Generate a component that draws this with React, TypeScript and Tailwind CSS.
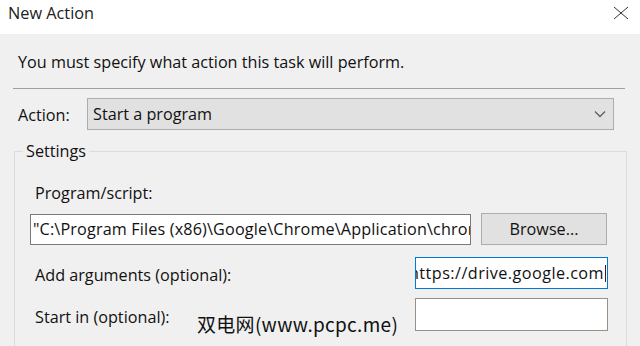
const FONT = { fontFamily: '"Open Sans", "Noto Sans", Arial, sans-serif' };

export default function App() {
  return (
    <div
      className="relative w-[640px] h-[346px] overflow-hidden bg-[#f0f0f0] text-[16.2px] text-[#111]"
      style={FONT}
    >
      {/* title bar */}
      <div className="h-[34px] bg-white flex items-center justify-between pl-[8px] pr-[10px]">
        <span className="text-[16.3px] text-[#222] leading-none -mt-[7px]">New Action</span>
        <svg width="18" height="14" viewBox="0 0 18 14" className="-mt-[8px]">
          <path d="M2 1 L16 13 M16 1 L2 13" stroke="#333" strokeWidth="1" fill="none" />
        </svg>
      </div>

      <div className="pl-[13px] pr-[15px]">
        <p className="pt-[17px] pl-[5px] leading-[22px]">
          You must specify what action this task will perform.
        </p>
        <div className="mt-[15px] border-t border-[#a0a0a0]" />

        {/* action row */}
        <div className="mt-[9px] flex items-center pl-[5px] pr-[11px]">
          <span className="w-[69px] mt-[2px]">Action:</span>
          <div className="flex-1 h-[32px] bg-[#e1e1e1] border border-[#adadad] flex items-center justify-between pl-[5px] pr-[7px]">
            <span className="mt-[1px]">Start a program</span>
            <svg width="12" height="8" viewBox="0 0 12 8">
              <path d="M1 1.5 L6 6.5 L11 1.5" stroke="#606060" strokeWidth="1.3" fill="none" />
            </svg>
          </div>
        </div>

        {/* settings group */}
        <fieldset className="mt-[10px] ml-[1px] mr-[-2px] border border-[#dcdcdc] pl-[15px] pr-[18px] h-[220px]">
          <legend className="-ml-[7px] px-[3px] leading-[22px]">Settings</legend>

          <div className="pl-[5px] mt-[20px] leading-[22px]">Program/script:</div>
          <div className="mt-[9px] flex items-center gap-[10px]">
            <div className="w-[441px] h-[31px] bg-white border border-[#7a7a7a] flex items-center pl-[2px] overflow-hidden">
              <span className="whitespace-nowrap tracking-[0.15px]">
                "C:\Program Files (x86)\Google\Chrome\Application\chrome.exe"
              </span>
            </div>
            <div className="w-[126px] h-[32px] bg-[#e1e1e1] border border-[#adadad] flex items-center justify-center">
              <span className="mt-[1px]">Browse...</span>
            </div>
          </div>

          <div className="mt-[12px] flex items-center justify-between">
            <span className="pl-[5px] mt-[5px]">Add arguments (optional):</span>
            <div className="w-[193px] h-[32px] bg-white border border-[#0078d7] flex items-center justify-end pr-[1px] overflow-hidden">
              <span className="whitespace-nowrap shrink-0 tracking-[0.45px]">https://drive.google.com</span>
              <span className="w-[1px] h-[17px] bg-[#5a1010] ml-[1px] shrink-0" />
            </div>
          </div>

          <div className="mt-[9px] flex items-center justify-between">
            <span className="pl-[5px] mt-[5px]">Start in (optional):</span>
            <div className="w-[193px] h-[33px] bg-white border border-[#9a9088]" />
          </div>
        </fieldset>
      </div>

      {/* watermark overlay */}
      <div
        className="absolute left-[197px] top-[312px] text-[19px] leading-[24px] text-[#111] tracking-[0.3px]"
        style={{ fontFamily: '"Noto Sans CJK SC", "DejaVu Sans", sans-serif' }}
      >
        双电网(www.pcpc.me)
      </div>
    </div>
  );
}
